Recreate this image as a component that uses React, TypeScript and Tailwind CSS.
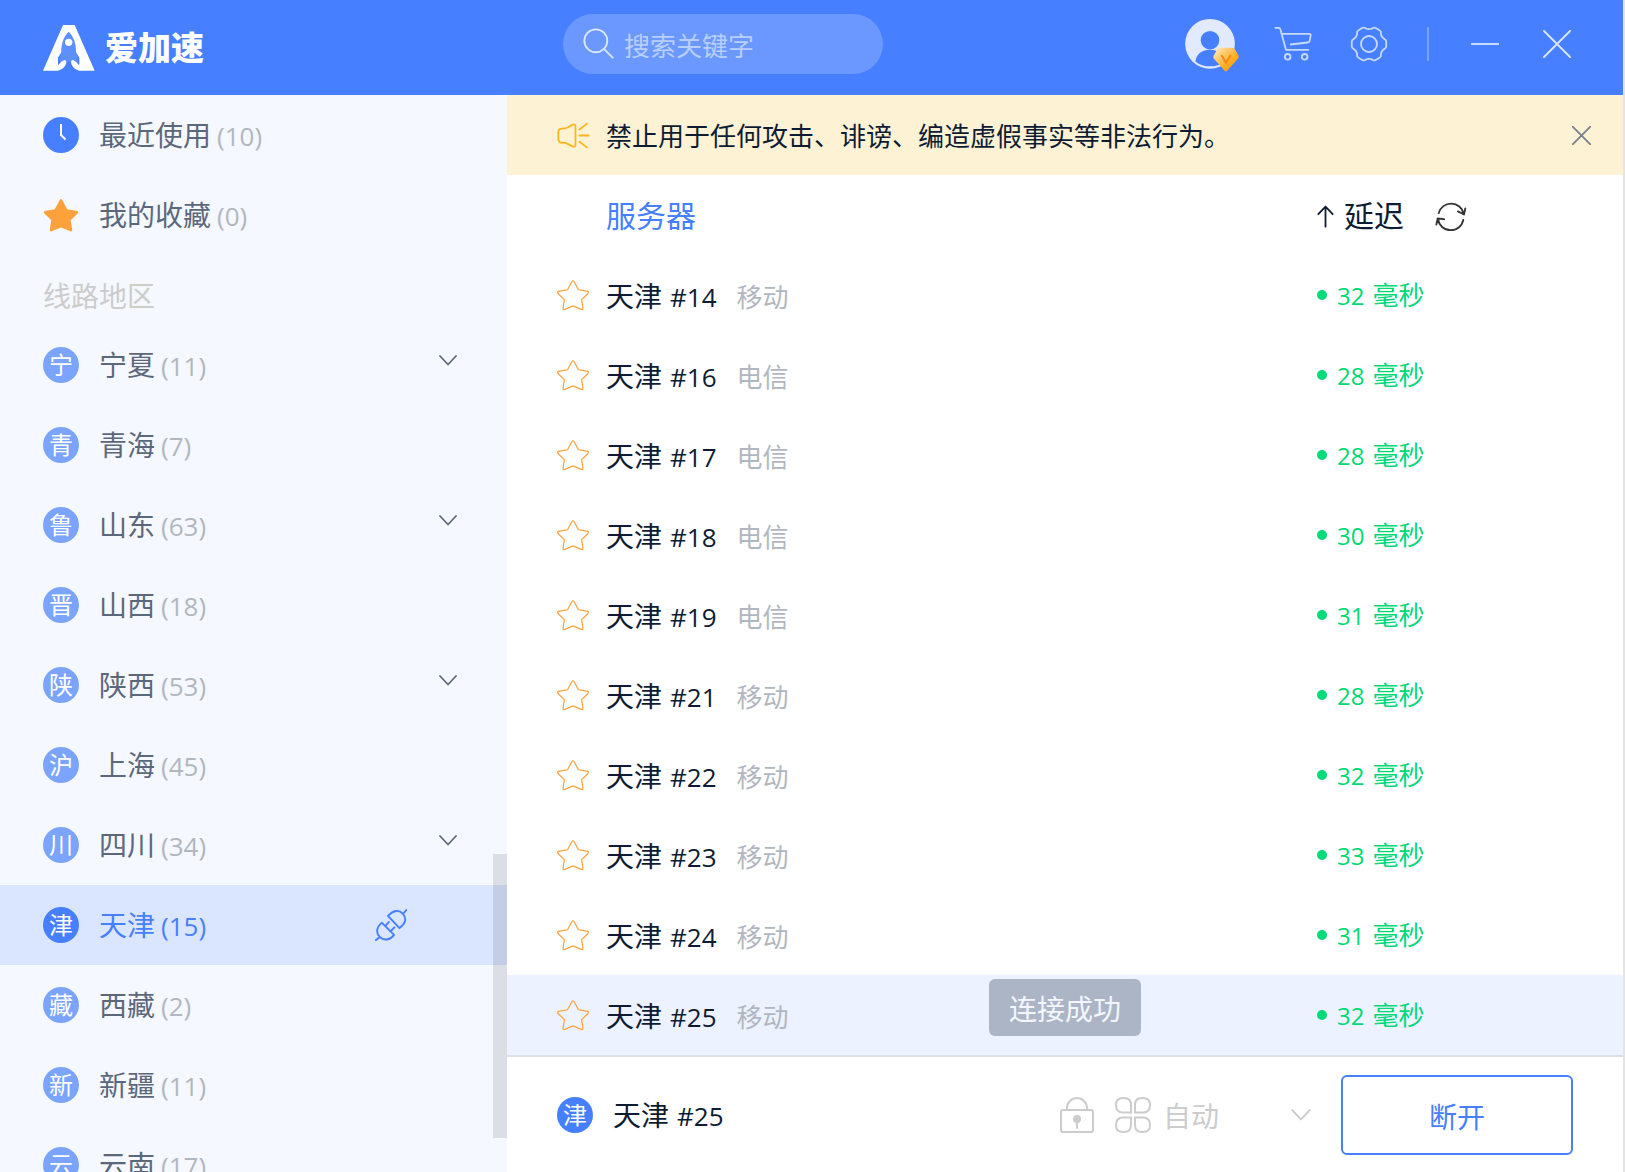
import { useState } from "react";
import clsx from "clsx";

interface Region {
  badge: string;
  name: string;
  count: number;
  expandable?: boolean;
}

interface Server {
  id: number;
  carrier: string;
  latency: number;
}

const REGIONS: Region[] = [
  { badge: "宁", name: "宁夏", count: 11, expandable: true },
  { badge: "青", name: "青海", count: 7 },
  { badge: "鲁", name: "山东", count: 63, expandable: true },
  { badge: "晋", name: "山西", count: 18 },
  { badge: "陕", name: "陕西", count: 53, expandable: true },
  { badge: "沪", name: "上海", count: 45 },
  { badge: "川", name: "四川", count: 34, expandable: true },
  { badge: "津", name: "天津", count: 15 },
  { badge: "藏", name: "西藏", count: 2 },
  { badge: "新", name: "新疆", count: 11 },
  { badge: "云", name: "云南", count: 17 },
];

const SERVERS: Server[] = [
  { id: 14, carrier: "移动", latency: 32 },
  { id: 16, carrier: "电信", latency: 28 },
  { id: 17, carrier: "电信", latency: 28 },
  { id: 18, carrier: "电信", latency: 30 },
  { id: 19, carrier: "电信", latency: 31 },
  { id: 21, carrier: "移动", latency: 28 },
  { id: 22, carrier: "移动", latency: 32 },
  { id: 23, carrier: "移动", latency: 33 },
  { id: 24, carrier: "移动", latency: 31 },
  { id: 25, carrier: "移动", latency: 32 },
];

const STAR_PATH =
  "M15 1.5Q16 .2 17 1.5L21.5 9.8L30.5 11.4Q32 12 31 13.5L24.6 19.6L26 28.4Q25.8 30 24.3 29.4L16 26L7.7 29.4Q6.2 30 6 28.4L7.4 19.6L1 13.5Q0 12 1.5 11.4L10.5 9.8Z";

// Six-lobed gear outline with softened corners.
function gearPath(cx: number, cy: number) {
  const points: [number, number][] = [];
  for (let lobe = 0; lobe < 6; lobe++) {
    for (const [offset, radius] of [[-13, 17.7], [13, 17.7], [22, 15], [38, 15]]) {
      const angle = ((lobe * 60 + offset) * Math.PI) / 180;
      points.push([cx + radius * Math.cos(angle), cy + radius * Math.sin(angle)]);
    }
  }
  const toward = (a: [number, number], b: [number, number]) => {
    const t = 1.8 / Math.hypot(b[0] - a[0], b[1] - a[1]);
    return `${(a[0] + (b[0] - a[0]) * t).toFixed(2)} ${(a[1] + (b[1] - a[1]) * t).toFixed(2)}`;
  };
  const n = points.length;
  return (
    points
      .map((p, i) => {
        const prev = points[(i + n - 1) % n];
        const next = points[(i + 1) % n];
        return `${i ? "L" : "M"}${toward(p, prev)}Q${p[0].toFixed(2)} ${p[1].toFixed(2)} ${toward(p, next)}`;
      })
      .join("") + "Z"
  );
}

const GEAR_PATH = gearPath(19, 18);

function Logo() {
  return (
    <svg viewBox="0 0 156 138" className="h-[46px] w-[52px]" aria-hidden="true">
      <path d="M77 20C92 34 100 58 99 82L104 98V116L94 106Q77 116 60 106L50 116V98L55 82C54 58 62 34 77 20Z" fill="#5c90ff" />
      <path
        d="M60 0H95L155 137H110C96 135 86 124 84 112C84 106 90 103 94 107C100 111 105 115 107 120L109 118V98L99 82C100 58 92 34 77 20C62 34 54 58 55 82L45 98V118L47 120C50 115 54 110 60 107C66 103 70 107 70 112C68 124 58 135 44 137H0Z"
        fill="#fff"
      />
      <circle cx="77" cy="52" r="11" fill="#fff" />
    </svg>
  );
}

function Avatar() {
  return (
    <svg viewBox="0 -12 162 172" className="h-[57px] w-[54px]" aria-hidden="true">
      <defs>
        <linearGradient id="vip" x1="0" y1="0" x2="1" y2="1">
          <stop offset="0.1" stopColor="#ffe3ae" />
          <stop offset="0.6" stopColor="#ffae24" />
          <stop offset="1" stopColor="#f59300" />
        </linearGradient>
      </defs>
      <circle cx="75" cy="75" r="75" fill="#e1eaff" />
      <circle cx="75" cy="64" r="28" fill="#467fff" />
      <path d="M31 128C33 106 52 93 75 93S117 106 119 128C95 148 55 148 31 128Z" fill="#467fff" />
      <path d="M99 88Q102 87 106 87H142Q146 87 149 90L160 109Q163 115 159 120L127 156Q123 160 119 156L87 120Q83 115 87 109Z" fill="url(#vip)" />
      <path d="M109 109L123 132L138 109" fill="none" stroke="#f08a1c" strokeWidth="6" />
    </svg>
  );
}

function CartIcon() {
  return (
    <svg viewBox="27 31 114 104" className="h-[35px] w-[38px]" fill="none" stroke="#c8d9ff" strokeWidth="5.5" strokeLinecap="round" strokeLinejoin="round" aria-hidden="true">
      <path d="M31 36H41Q45 36 46 40L63 102H130M50 54H132Q138 54 137 59L134 75Q133 80 128 80L77 86" />
      <circle cx="68" cy="123" r="8.5" />
      <circle cx="119" cy="123" r="8.5" />
    </svg>
  );
}

function GearIcon() {
  return (
    <svg viewBox="0 0 38 36" className="h-9 w-[38px]" fill="none" stroke="#c8d9ff" strokeWidth="1.8" strokeLinejoin="round" aria-hidden="true">
      <path d={GEAR_PATH} />
      <circle cx="19" cy="18" r="8" />
    </svg>
  );
}

function CloseIcon({ className }: { className: string }) {
  return (
    <svg viewBox="0 0 28 28" className={className} fill="none" stroke="currentColor" strokeLinecap="round" aria-hidden="true">
      <path d="M1 1L27 27M27 1L1 27" />
    </svg>
  );
}

function SearchIcon() {
  return (
    <svg viewBox="0 0 92 92" className="size-[31px] shrink-0" fill="none" stroke="#dbe6ff" strokeWidth="5.5" strokeLinecap="round" aria-hidden="true">
      <circle cx="38" cy="38" r="34" />
      <path d="M62 62L88 88" />
    </svg>
  );
}

function MegaphoneIcon() {
  return (
    <svg viewBox="50 365 100 80" className="h-[27px] w-[33px]" fill="none" stroke="#ffb61e" strokeWidth="5.5" strokeLinecap="round" strokeLinejoin="round" aria-hidden="true">
      <path d="M63 384Q74 385 84 380L97 372Q106 369 106 377V433Q106 441 97 438L84 431Q74 426 63 427Q54 425 54 415V395Q54 385 63 384Z" />
      <path d="M118 387L141 369M118 405H146M118 424L141 441" />
    </svg>
  );
}

function ChevronIcon({ className }: { className: string }) {
  return (
    <svg viewBox="0 0 18 11" className={className} fill="none" stroke="currentColor" strokeWidth="1.8" strokeLinecap="round" strokeLinejoin="round" aria-hidden="true">
      <path d="M1 1L9 9.5L17 1" />
    </svg>
  );
}

function PlugIcon() {
  return (
    <svg viewBox="16 24 94 94" className="size-8" fill="none" stroke="#467fff" strokeWidth="5.5" strokeLinecap="round" strokeLinejoin="round" aria-hidden="true">
      <path d="M54 44L88 80C106 66 110 52 98 38C86 24 70 28 54 44ZM98 38L108 27" />
      <path d="M36 64L72 100C60 116 42 118 30 106C18 94 20 78 36 64ZM30 106L18 116M46 74L57 62M61 90L73 78" />
    </svg>
  );
}

function RefreshIcon() {
  return (
    <svg viewBox="856 603 95 86" className="h-[29px] w-8" fill="none" stroke="#333" strokeWidth="5.5" strokeLinecap="round" strokeLinejoin="round" aria-hidden="true">
      <path d="M867 636A38 38 0 0 1 941 638M924 631L942 640L946 622" />
      <path d="M940 656A38 38 0 0 1 865 654M860 670L864 652L883 654" />
    </svg>
  );
}

function LockIcon() {
  return (
    <svg viewBox="0 0 34 36" className="h-9 w-[34px]" fill="none" stroke="#ccc" strokeWidth="2" aria-hidden="true">
      <rect x="1" y="13" width="32" height="22" rx="2" />
      <path d="M7 13V11A10 10 0 0 1 27 11V13" />
      <circle cx="17" cy="22" r="4" fill="#ccc" stroke="none" />
      <path d="M17 24V31" strokeLinecap="round" />
    </svg>
  );
}

function ModeIcon() {
  return (
    <svg viewBox="0 0 36 36" className="size-9" fill="none" stroke="#ccc" strokeWidth="2" aria-hidden="true">
      <path d="M8 1H9Q16 1 16 8V15.500H8Q1 15.500 1 8Q1 1 8 1Z" />
      <path d="M28 1H27Q20 1 20 8V15.500H28Q35 15.500 35 8Q35 1 28 1Z" />
      <path d="M8 35H9Q16 35 16 28V20.500H8Q1 20.500 1 28Q1 35 8 35Z" />
      <path d="M28 35H27Q20 35 20 28V20.500H28Q35 20.500 35 28Q35 35 28 35Z" />
    </svg>
  );
}

function RegionBadge({ text, active }: { text: string; active: boolean }) {
  return (
    <span
      className={clsx(
        "flex size-9 shrink-0 items-center justify-center rounded-full text-2xl leading-9 text-white",
        active ? "bg-[#467fff]" : "bg-[#7ba4ff]",
      )}
    >
      {text}
    </span>
  );
}

function CountLabel({ name, count, active }: { name: string; count: number; active?: boolean }) {
  return (
    <span className={clsx("flex items-baseline gap-1.5 text-[28px] leading-9", active ? "text-[#467fff]" : "text-[#5b687c]")}>
      {name}
      <span className={clsx("text-[26px]", !active && "text-[#b1b7c0]")}>({count})</span>
    </span>
  );
}

function Header() {
  return (
    <header className="flex h-[95px] shrink-0 items-center bg-[#467fff] pr-[52px]">
      <div className="flex w-[507px] shrink-0 items-center gap-2.5 pl-[43px]">
        <Logo />
        <h1 className="text-[33px] leading-10 font-black text-white">爱加速</h1>
      </div>
      <div className="flex flex-1 items-center pb-2 pl-14">
        <label className="flex h-[60px] w-80 items-center gap-2.5 rounded-full bg-[#6b98ff] pl-5">
          <SearchIcon />
          <input
            type="search"
            aria-label="搜索关键字"
            placeholder="搜索关键字"
            className="w-full min-w-0 bg-transparent pt-1 text-[26px] leading-9 text-white outline-none placeholder:text-[#b8ceff]"
          />
        </label>
        <div className="ml-auto flex items-center">
          <button type="button" aria-label="账户" className="mr-[35px]">
            <Avatar />
          </button>
          <button type="button" aria-label="购物车" className="mr-[38px]">
            <CartIcon />
          </button>
          <button type="button" aria-label="设置" className="mr-[39px]">
            <GearIcon />
          </button>
          <span className="mr-[42px] h-[34px] w-0.5 bg-[#7ba4ff]" />
          <button type="button" aria-label="最小化" className="mr-11 flex h-7 w-7 items-center">
            <span className="h-0.5 w-full bg-[#c8d9ff]" />
          </button>
          <button type="button" aria-label="关闭" className="text-[#dbe6ff]">
            <CloseIcon className="size-7 stroke-[1.8]" />
          </button>
        </div>
      </div>
    </header>
  );
}

function Sidebar() {
  const [selected, setSelected] = useState("天津");

  return (
    <nav className="relative w-[507px] shrink-0 overflow-hidden bg-[#f5f8ff]">
      <button type="button" className="flex h-20 w-full items-center gap-5 pl-[43px]">
        <svg viewBox="0 0 36 36" className="size-9" aria-hidden="true">
          <circle cx="18" cy="18" r="18" fill="#467fff" />
          <path d="M18 7V18L22.500 22.500" fill="none" stroke="#fff" strokeWidth="2" />
        </svg>
        <CountLabel name="最近使用" count={10} />
      </button>
      <button type="button" className="flex h-20 w-full items-center gap-5 pl-[43px]">
        <svg viewBox="0 0 32 30" className="h-[34px] w-9" fill="#ffa13b" aria-hidden="true">
          <path d={STAR_PATH} />
        </svg>
        <CountLabel name="我的收藏" count={0} />
      </button>
      <h2 className="flex h-[70px] items-center pt-3 pl-[43px] text-[28px] leading-9 text-[#ccc]">线路地区</h2>
      <ul>
        {REGIONS.map((region) => {
          const active = region.name === selected;
          return (
            <li key={region.name}>
              <button
                type="button"
                onClick={() => setSelected(region.name)}
                className={clsx("flex h-20 w-full items-center gap-5 pr-[50px] pl-[43px]", active && "bg-[#dae6ff]")}
              >
                <RegionBadge text={region.badge} active={active} />
                <CountLabel name={region.name} count={region.count} active={active} />
                {region.expandable && (
                  <span className="ml-auto pb-2.5 text-[#5b687c]">
                    <ChevronIcon className="h-[11px] w-[18px]" />
                  </span>
                )}
                {active && (
                  <span className="mr-[50px] ml-auto">
                    <PlugIcon />
                  </span>
                )}
              </button>
            </li>
          );
        })}
      </ul>
      <div className="absolute right-0 bottom-[34px] h-[284px] w-3.5 bg-black/10" />
    </nav>
  );
}

function Notice({ onClose }: { onClose: () => void }) {
  return (
    <div className="flex h-20 shrink-0 items-center gap-4 bg-[#fef2d5] pr-8 pl-[50px]">
      <MegaphoneIcon />
      <p className="pt-0.5 text-[26px] leading-9 text-[#0e1c33]">禁止用于任何攻击、诽谤、编造虚假事实等非法行为。</p>
      <button type="button" aria-label="关闭提示" onClick={onClose} className="ml-auto text-[#7b8290]">
        <CloseIcon className="size-[19px] stroke-[2.8]" />
      </button>
    </div>
  );
}

function ServerTable({ current }: { current: number }) {
  return (
    <table className="w-full table-fixed text-left">
      <thead>
        <tr className="h-20">
          <td className="w-[99px]" />
          <th scope="col" className="pt-0.5 text-[30px] leading-10 font-normal text-[#467fff]">
            服务器
          </th>
          <th scope="col" className="w-[306px] pt-0.5 font-normal">
            <div className="flex items-center gap-[31px]">
              <button type="button" className="flex items-center gap-2.5 text-[30px] leading-10 text-[#0e1c33]">
                <svg viewBox="502 613 52 70" className="h-[23px] w-[17px]" fill="none" stroke="currentColor" strokeWidth="5.5" strokeLinecap="round" strokeLinejoin="round" aria-hidden="true">
                  <path d="M528 679V618M506 641L528 618L550 641" />
                </svg>
                延迟
              </button>
              <button type="button" aria-label="刷新">
                <RefreshIcon />
              </button>
            </div>
          </th>
        </tr>
      </thead>
      <tbody>
        {SERVERS.map(({ id, carrier, latency }) => (
          <tr key={id} className={clsx("h-20", id === current && "bg-[#ecf2ff]")}>
            <td className="pl-[50px]">
              <button type="button" aria-label={`收藏 天津 #${id}`} className="block">
                <svg viewBox="0 0 32 30" className="h-[30px] w-8" fill="none" stroke="#ffa13b" strokeWidth="1.2" aria-hidden="true">
                  <path d={STAR_PATH} />
                </svg>
              </button>
            </td>
            <td>
              <div className="flex items-baseline gap-5 pt-0.5 leading-9">
                <span className="flex items-baseline gap-2 text-[28px] text-[#0e1c33]">
                  天津 <span className="text-[26px]">#{id}</span>
                </span>
                <span className="text-[26px] text-[#b1b7c0]">{carrier}</span>
              </div>
            </td>
            <td>
              <div className="flex items-center gap-2.5 text-[26px] leading-9 text-[#00d977]">
                <span className="size-2.5 rounded-full bg-[#00d977]" />
                <span className="flex items-baseline gap-2">
                  <span className="text-2xl">{latency}</span> 毫秒
                </span>
              </div>
            </td>
          </tr>
        ))}
      </tbody>
    </table>
  );
}

function ConnectionBar({ current }: { current: number }) {
  return (
    <footer className="flex flex-1 items-center border-t-2 border-[#dcdfe4] pr-[50px] pl-[50px]">
      <RegionBadge text="津" active />
      <span className="ml-5 flex items-baseline gap-2 pt-0.5 text-[28px] leading-9 text-[#0e1c33]">
        天津 <span className="text-[26px]">#{current}</span>
      </span>
      <button type="button" aria-label="锁定" className="mr-[21px] ml-auto">
        <LockIcon />
      </button>
      <label className="relative mr-[30px] flex items-center gap-3 text-[#ccc]">
        <ModeIcon />
        <select aria-label="模式" className="w-[148px] appearance-none bg-transparent pt-0.5 text-[28px] leading-9 outline-none">
          <option>自动</option>
        </select>
        <ChevronIcon className="pointer-events-none absolute right-0 h-3 w-5" />
      </label>
      <button type="button" className="h-20 w-[232px] rounded-md border-2 border-[#467fff] pt-1 text-[28px] leading-9 text-[#467fff]">
        断开
      </button>
    </footer>
  );
}

export default function App() {
  const [showNotice, setShowNotice] = useState(true);
  const current = 25;

  return (
    <div className="flex h-screen flex-col overflow-hidden border-r-2 border-[#e4e4e4] bg-white font-['Open_Sans','Noto_Sans_CJK_SC',sans-serif]">
      <Header />
      <div className="flex min-h-0 flex-1">
        <Sidebar />
        <main className="relative flex min-w-0 flex-1 flex-col">
          {showNotice && <Notice onClose={() => setShowNotice(false)} />}
          <ServerTable current={current} />
          <ConnectionBar current={current} />
          <div className="absolute inset-x-0 bottom-[136px] flex justify-center">
            <p role="status" className="flex h-[57px] items-center rounded-md bg-[#abb5c5] px-5 pt-0.5 text-[28px] leading-9 text-[#f3f6ff]">
              连接成功
            </p>
          </div>
        </main>
      </div>
    </div>
  );
}
